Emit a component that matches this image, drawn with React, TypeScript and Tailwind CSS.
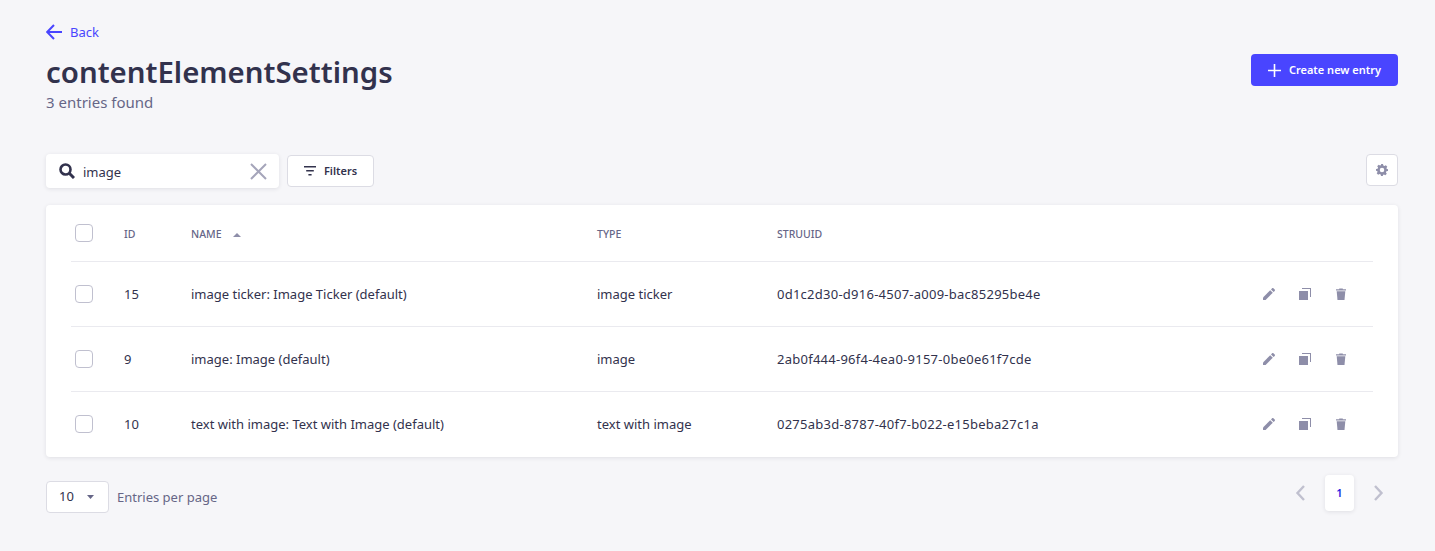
const rows = [
  { id: "15", name: "image ticker: Image Ticker (default)", type: "image ticker", uid: "0d1c2d30-d916-4507-a009-bac85295be4e" },
  { id: "9", name: "image: Image (default)", type: "image", uid: "2ab0f444-96f4-4ea0-9157-0be0e61f7cde" },
  { id: "10", name: "text with image: Text with Image (default)", type: "text with image", uid: "0275ab3d-8787-40f7-b022-e15beba27c1a" },
];

const font = { fontFamily: '"Noto Sans", "Open Sans", sans-serif' };

function Check() {
  return <span className="block w-[18px] h-[18px] rounded-[4px] border border-[#c0c0cf] bg-white" />;
}

function Pencil() {
  return (
    <svg width="12" height="12" viewBox="0 0 12 12" fill="#8e8ea9">
      <path d="M0 12V9.4L7.2 2.2L9.8 4.8L2.6 12H0Z" />
      <path d="M8 1.4L9.1 0.3C9.5-0.1 10-0.1 10.4 0.3L11.7 1.6C12.1 2 12.1 2.5 11.7 2.9L10.6 4L8 1.4Z" />
    </svg>
  );
}

function Duplicate() {
  return (
    <svg width="12" height="12" viewBox="0 0 12 12" fill="#8e8ea9">
      <path d="M0 3H9V12H0V3Z" />
      <path d="M3 0H12V9H11V1H3V0Z" />
    </svg>
  );
}

function Trash() {
  return (
    <svg width="12" height="12" viewBox="-1 0 12 12" fill="#8e8ea9">
      <path d="M0 1.3H3.2V0.4H6.8V1.3H10V2.4H0V1.3Z" />
      <path d="M0.7 3.3H9.3L8.5 12H1.5L0.7 3.3Z" />
    </svg>
  );
}

export default function App() {
  return (
    <div className="min-h-[551px] bg-[#f6f6f9] pl-[46px] pr-[37px] text-[#32324d]" style={font}>
      <div className="flex justify-between h-[154px]">
        <div>
          <a className="flex items-center gap-[8px] text-[#4945ff] text-[13px] leading-[18px] pt-[23px]">
            <svg width="16" height="16" viewBox="0 0 16 16" fill="none" stroke="#4945ff" strokeWidth="2">
              <path d="M16 8H1.4" />
              <path d="M8 1L1.2 8L8 15" />
            </svg>
            <span>Back</span>
          </a>
          <h1 className="mt-[11px] text-[29.4px] leading-[40px] font-semibold">contentElementSettings</h1>
          <p className="text-[15px] leading-[22px] text-[#666687] mt-[-1px]">3 entries found</p>
        </div>
        <button className="mt-[54px] w-[147px] h-[32px] rounded-[4px] bg-[#4945ff] text-white flex items-center justify-center gap-[8px] text-[11px] font-semibold">
          <svg width="13" height="13" viewBox="0 0 13 13" stroke="#fff" strokeWidth="1.6"><path d="M6.5 0V13M0 6.5H13" /></svg>
          Create new entry
        </button>
      </div>

      <div className="flex items-center justify-between h-[34px]">
        <div className="flex items-center gap-[8px]">
          <div className="w-[233px] h-[34px] bg-white rounded-[4px] shadow-[0_1px_4px_rgba(33,33,52,0.1)] flex items-center pl-[13px] pr-[12px]">
            <svg width="16" height="16" viewBox="0 0 16 16" fill="none" stroke="#32324d">
              <circle cx="6.5" cy="6.5" r="5" strokeWidth="2.6" />
              <path d="M10.3 10.3L15 15" strokeWidth="3" />
            </svg>
            <span className="ml-[8px] text-[13px] text-[#32324d] flex-1 leading-[20px] pt-[1px]">image</span>
            <svg width="17" height="17" viewBox="0 0 17 17" stroke="#a5a5ba" strokeWidth="2"><path d="M1 1L16 16M16 1L1 16" /></svg>
          </div>
          <button className="w-[87px] h-[32px] bg-white rounded-[4px] border border-[#dcdce4] flex items-center justify-center gap-[8px] text-[11px] font-semibold">
            <svg width="12" height="10" viewBox="0 0 12 10" fill="#32324d"><path d="M0 0H12V1.6H0ZM2.2 4H9.8V5.6H2.2ZM4.4 8H7.6V9.6H4.4Z" /></svg>
            Filters
          </button>
        </div>
        <button className="w-[32px] h-[32px] mb-[2px] bg-white rounded-[4px] border border-[#dcdce4] flex items-center justify-center">
          <svg width="12" height="12" viewBox="0 0 24 24" fill="#8e8ea9">
            <path fillRule="evenodd" d="M10 0h4l.7 3.2 2.2.9 2.8-1.7 2.9 2.9-1.7 2.8.9 2.2L24 10v4l-3.2.7-.9 2.2 1.7 2.8-2.9 2.9-2.8-1.7-2.2.9L14 24h-4l-.7-3.2-2.2-.9-2.8 1.7-2.9-2.9 1.7-2.8-.9-2.2L0 14v-4l3.2-.7.9-2.2-1.7-2.8 2.9-2.9 2.8 1.7 2.2-.9L10 0zm2 7.5a4.5 4.5 0 1 0 0 9 4.5 4.5 0 0 0 0-9z" />
          </svg>
        </button>
      </div>

      <div className="mt-[17px] bg-white rounded-[4px] shadow-[0_1px_4px_rgba(33,33,52,0.1)] px-[25px] h-[252px]">
        <div className="flex items-center h-[56px] text-[10.5px] font-medium text-[#666687] uppercase">
          <div className="w-[53px] pl-[4px]"><Check /></div>
          <div className="w-[67px] pt-[4px]">ID</div>
          <div className="w-[406px] pt-[4px] flex items-center gap-[11px]">
            NAME
            <svg width="8" height="4" viewBox="0 0 8 4" fill="#8e8ea9"><path d="M4 0L8 4H0Z" /></svg>
          </div>
          <div className="w-[180px] pt-[4px]">Type</div>
          <div className="pt-[4px]">StruUID</div>
        </div>
        {rows.map((r) => (
          <div key={r.id} className="flex items-center h-[65px] border-t border-[#eaeaef] text-[13px] text-[#32324d]">
            <div className="w-[53px] pl-[4px]"><Check /></div>
            <div className="w-[67px] pt-[2px]">{r.id}</div>
            <div className="w-[406px] pt-[2px]">{r.name}</div>
            <div className="w-[180px] pt-[2px]">{r.type}</div>
            <div className="flex-1 pt-[2px] tracking-[0.25px]">{r.uid}</div>
            <div className="flex items-center gap-[24px] pr-[26px]">
              <Pencil />
              <Duplicate />
              <Trash />
            </div>
          </div>
        ))}
      </div>

      <div className="flex justify-between mt-[18px]">
        <div className="flex items-center gap-[8px] mt-[6px]">
          <div className="w-[63px] h-[32px] bg-white border border-[#dcdce4] rounded-[4px] flex items-center justify-between pl-[12px] pr-[14px] text-[13px]">
            10
            <svg width="7" height="4" viewBox="0 0 7 4" fill="#666687"><path d="M0 0H7L3.5 4Z" /></svg>
          </div>
          <span className="text-[13px] pt-[2px] text-[#666687]">Entries per page</span>
        </div>
        <div className="flex items-center gap-[14px] pr-[10px] h-[36px]">
          <svg width="20" height="20" viewBox="0 0 20 20" fill="none" stroke="#c0c0cf" strokeWidth="2.4"><path d="M13 3L6.5 10L13 17" /></svg>
          <div className="w-[29px] h-[36px] bg-white rounded-[4px] shadow-[0_1px_4px_rgba(33,33,52,0.1)] flex items-center justify-center text-[11px] font-semibold text-[#271fe0]">1</div>
          <svg width="20" height="20" viewBox="0 0 20 20" fill="none" stroke="#c0c0cf" strokeWidth="2.4"><path d="M7 3L13.5 10L7 17" /></svg>
        </div>
      </div>
    </div>
  );
}
